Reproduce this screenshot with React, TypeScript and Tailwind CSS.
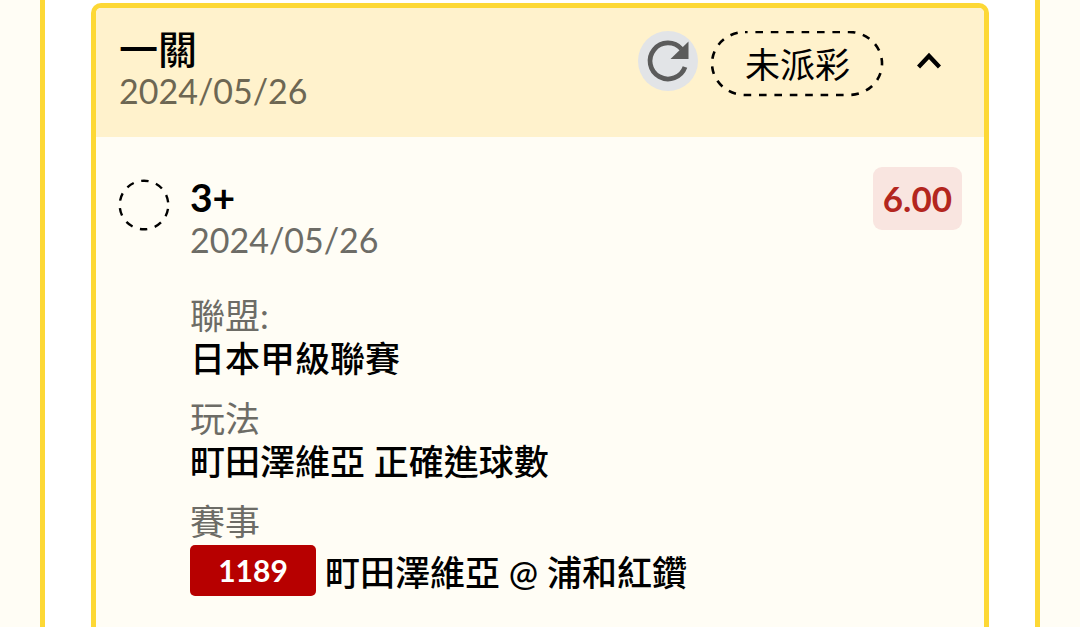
import type { ReactNode } from "react";

type DetailProps = { label: string; children: ReactNode };

function Detail({ label, children }: DetailProps) {
  return (
    <div>
      <dt className="text-[35px] leading-[43px] text-[#6d6c66]">{label}</dt>
      <dd className="text-[35px] leading-[43px] font-medium">{children}</dd>
    </div>
  );
}

function RefreshIcon() {
  return (
    <svg viewBox="0 0 60 60" className="size-[60px]" aria-hidden="true">
      <path
        d="M47 36 A18 18 0 1 1 43.5 18"
        fill="none"
        stroke="#5b5b5b"
        strokeWidth="4.8"
      />
      <path d="M50.5 10.5 V28 H32.5 Z" fill="#5b5b5b" />
    </svg>
  );
}

export default function App() {
  return (
    <div className="min-h-screen bg-[#fffdf5] px-10 font-[Lato,'Noto_Sans_CJK_TC',sans-serif] text-black">
      <main className="flex min-h-screen flex-col border-x-[5px] border-[#fdd835] bg-white px-[46px] pt-[3px]">
        <article className="flex-1 rounded-t-[10px] border-[5px] border-b-0 border-[#fdd835] bg-[#fffdf5]">
          <header className="flex items-start justify-between rounded-t-[5px] bg-[#fff2cc] px-[23px] pt-5 pb-[25px]">
            <div>
              <h1 className="text-[39px] leading-[42px] font-medium">一關</h1>
              <p className="text-[34px] leading-[42px] text-[#6d6753]">2024/05/26</p>
            </div>
            <div className="flex items-start pt-[3px]">
              <button type="button" aria-label="重新整理" className="rounded-full bg-[#e2e4e7]">
                <RefreshIcon />
              </button>
              <span className="relative ml-[13px] px-[34px] py-3 text-[35px] leading-[42px]">
                <svg className="absolute inset-0 size-full" aria-hidden="true">
                  <rect
                    x="0"
                    y="0"
                    width="100%"
                    height="100%"
                    rx="33"
                    className="translate-[1px] [height:calc(100%-3px)] [width:calc(100%-3px)]"
                    fill="none"
                    stroke="black"
                    strokeWidth="2.6"
                    strokeDasharray="7.6 7.8"
                    strokeDashoffset="5"
                  />
                </svg>
                未派彩
              </span>
              <button
                type="button"
                aria-label="收合"
                className="mr-5 ml-[33px] flex h-[60px] items-center"
              >
                <svg viewBox="0 0 24 24" className="size-6" aria-hidden="true">
                  <path d="M1.5 18 L12 7 L22.5 18" fill="none" stroke="black" strokeWidth="4.4" />
                </svg>
              </button>
            </div>
          </header>
          <section className="flex items-start px-[22px] pt-[30px]">
            <svg viewBox="0 0 52 52" className="mt-3 size-[52px] shrink-0" aria-hidden="true">
              <circle
                cx="26"
                cy="26"
                r="24.3"
                fill="none"
                stroke="black"
                strokeWidth="2.4"
                strokeDasharray="7.6 7.668"
                strokeDashoffset="-4"
              />
            </svg>
            <div className="ml-5 flex-1">
              <div className="flex items-start justify-between">
                <div className="pt-[9px]">
                  <h2 className="text-[39px] leading-[42px] font-bold">3+</h2>
                  <p className="text-[34px] leading-[43px] text-[#6d6c66]">2024/05/26</p>
                </div>
                <strong className="rounded-[9px] bg-[#f9e5e0] px-[10px] py-[10px] text-[35px] leading-[43px] font-bold text-[#b3261e]">
                  6.00
                </strong>
              </div>
              <dl className="mt-[33px] flex flex-col gap-[17px]">
                <Detail label="聯盟:">日本甲級聯賽</Detail>
                <Detail label="玩法">町田澤維亞 正確進球數</Detail>
                <Detail label="賽事">
                  <span className="flex items-end gap-[9px] pt-[2px]">
                    <span className="w-[126px] rounded-[5px] bg-[#b70000] py-1 text-center text-[30px] leading-[43px] font-bold text-white">
                      1189
                    </span>
                    <span className="pb-[2px]">町田澤維亞 @ 浦和紅鑽</span>
                  </span>
                </Detail>
              </dl>
            </div>
          </section>
        </article>
      </main>
    </div>
  );
}
